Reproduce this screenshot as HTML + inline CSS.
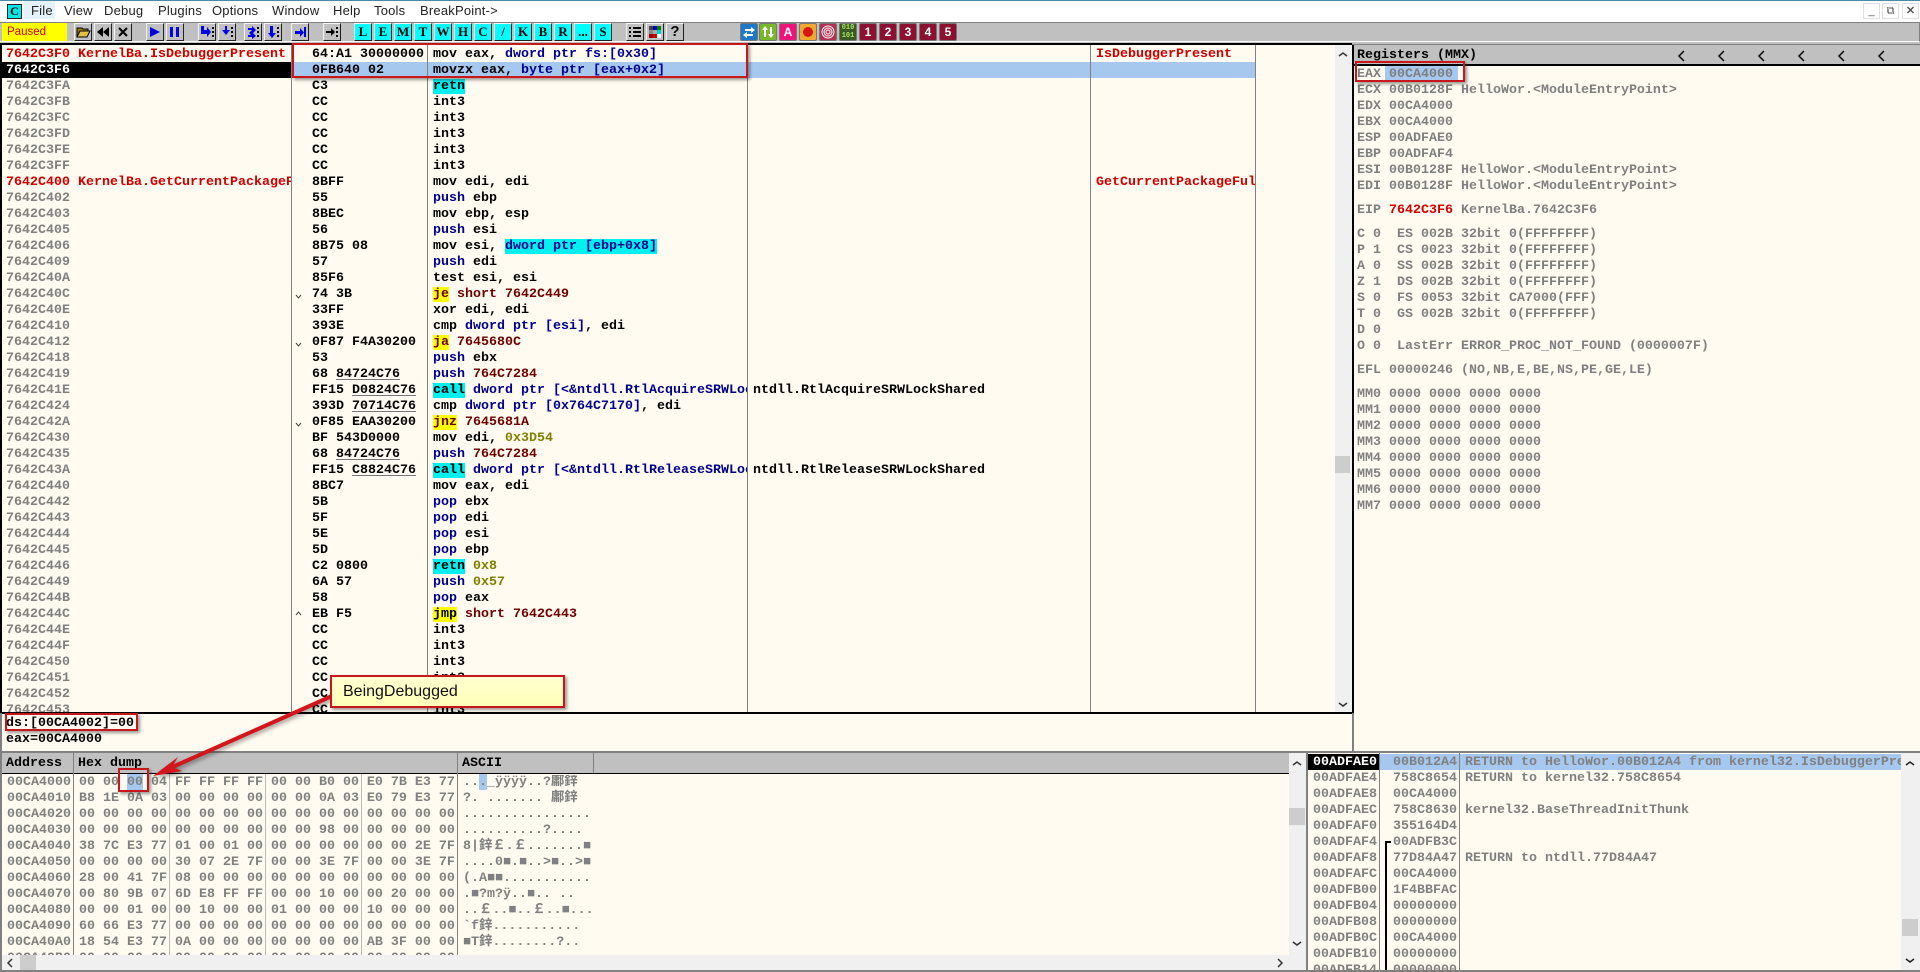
<!DOCTYPE html>
<html lang="en"><head><meta charset="utf-8"><title>OllyDbg</title>
<style>
html,body{margin:0;padding:0;width:1920px;height:972px;overflow:hidden;background:#fffbf0}
body{position:relative;font-family:"Liberation Mono","Noto Sans CJK SC",monospace;font-size:13.33px;font-weight:bold;color:#000}
pre,div.a,svg.a{position:absolute;margin:0}
pre{font:inherit;line-height:16px;white-space:pre;overflow:hidden}
.g{color:#808080}
.n{color:#00008b}
.o{color:#808000}
.d{color:#6e0000}
.rd{color:#d00000}
.c{background:#00f0f0}
.y{background:#ffff00}
.u{text-decoration:underline;text-decoration-color:#777;text-underline-offset:2px;text-decoration-thickness:1px}
.l{position:absolute;background:#808080}
.box{position:absolute;box-sizing:border-box;border:2px solid #c8161d;box-shadow:2px 2px 3px rgba(0,0,0,.4)}
.m{position:absolute;top:2px;font:13px/17px "Liberation Sans",sans-serif;color:#222;letter-spacing:.2px}
.b{position:absolute;top:23px;width:18px;height:18px;box-sizing:border-box;background:#c0c0c0;border:1px solid;border-color:#f4f4f4 #222 #222 #f4f4f4}
.b svg{position:absolute;left:0;top:0}
.k{background:#00ffff;font:bold 13px/16px "Liberation Serif",serif;text-align:center;color:#000}
.q{position:absolute;top:23px;width:18px;height:18px;box-sizing:border-box;border:1px solid #777;border-radius:2px;font:bold 12px/16px "Liberation Sans",sans-serif;text-align:center;color:#fff;background:#8c1030}
.win{position:absolute;top:3px;width:17px;height:16px;box-sizing:border-box;border:1px solid #e0e0e0;font:11px/14px "Liberation Sans",sans-serif;text-align:center;color:#555}
.sb{position:absolute;background:#f0f0f0}
.th{position:absolute;background:#cdcdcd}
</style></head><body>

<!-- title & menu -->
<div class="a" style="left:0;top:0;width:1920px;height:22px;background:#fff"></div>
<div class="a" style="left:0;top:0;width:1920px;height:1px;background:#4a8aa5"></div>
<div class="a" style="left:24px;top:1px;width:31px;height:18px;background:#e5f1fb"></div>
<div class="a" style="left:7px;top:4px;width:15px;height:15px;box-sizing:border-box;background:#00e8e8;border:1px solid #222;font:bold 12px/13px 'Liberation Serif',serif;text-align:center;color:#000">C</div>
<div class="m" style="left:31px">File</div>
<div class="m" style="left:64px">View</div>
<div class="m" style="left:104px">Debug</div>
<div class="m" style="left:158px">Plugins</div>
<div class="m" style="left:212px">Options</div>
<div class="m" style="left:272px">Window</div>
<div class="m" style="left:333px">Help</div>
<div class="m" style="left:374px">Tools</div>
<div class="m" style="left:420px">BreakPoint-&gt;</div>
<div class="win" style="left:1863px">_</div>
<div class="win" style="left:1882px">&#10697;</div>
<div class="win" style="left:1902px;font-weight:bold">&#10005;</div>

<!-- toolbar -->
<div class="a" style="left:0;top:22px;width:1920px;height:20px;box-sizing:border-box;background:#c0c0c0;border-top:1px solid #808080;border-bottom:1px solid #fff;border-right:1px solid #808080"></div>
<div class="a" style="left:0;top:42px;width:1920px;height:2px;background:#c0c0c0"></div>
<div class="a" style="left:2px;top:23px;width:65px;height:18px;background:#ffff00;font:11.500px/18px 'Liberation Sans',sans-serif;color:#d00000;text-indent:5px">Paused</div>

<div class="b" style="left:74px"><svg width="16" height="16"><path d="M2 4h5l1 1h5v2H5L2 13z" fill="#a08000" stroke="#000"/><path d="M2 13l3-6h10l-3 6z" fill="#e0c040" stroke="#000"/></svg></div>
<div class="b" style="left:94px"><svg width="16" height="16"><path d="M8 3v10L2 8zM14 3v10L8 8z" fill="#000"/></svg></div>
<div class="b" style="left:114px"><svg width="16" height="16"><path d="M4 4l8 8M12 4l-8 8" stroke="#000" stroke-width="2"/></svg></div>
<div class="b" style="left:146px"><svg width="16" height="16"><path d="M3 3l10 5-10 5z" fill="#0000e0"/></svg></div>
<div class="b" style="left:166px"><svg width="16" height="16"><path d="M3 3h3v10H3zM9 3h3v10H9z" fill="#0000e0"/></svg></div>
<div class="b" style="left:198px"><svg width="16" height="16"><path d="M2 2h3v4h3V3l4 5-4 5v-3H2z" fill="#0000e0"/><path d="M13 3h2v2h-2zM13 7h2v2h-2zM13 11h2v2h-2z" fill="#000"/></svg></div>
<div class="b" style="left:218px"><svg width="16" height="16"><path d="M6 2h2v4h3l-4 5-4-5h3z" fill="#0000e0"/><path d="M12 3h2v2h-2zM12 7h2v2h-2zM12 11h2v2h-2z" fill="#000"/></svg></div>
<div class="b" style="left:244px"><svg width="16" height="16"><path d="M7 2l4 4-3 3 3 3-4 3v-2H3v-2h3L4 9l3-3H3V4h4z" fill="#0000e0"/><path d="M12 3h2v2h-2zM12 7h2v2h-2zM12 11h2v2h-2z" fill="#000"/></svg></div>
<div class="b" style="left:264px"><svg width="16" height="16"><path d="M5 2h3v7h3l-4 5-4-5h2z" fill="#0000e0"/><path d="M12 3h2v2h-2zM12 7h2v2h-2zM12 11h2v2h-2z" fill="#000"/></svg></div>
<div class="b" style="left:291px"><svg width="16" height="16"><path d="M3 7h5V4l4 4.500-4 4.500V10H3z" fill="#0000e0"/><path d="M12 3h2v10h-2z" fill="#0000e0"/></svg></div>
<div class="b" style="left:323px"><svg width="16" height="16"><path d="M2 7h5V4l4 4-4 4V9H2z" fill="#000"/><path d="M12 3h2v2h-2zM12 7h2v2h-2zM12 11h2v2h-2z" fill="#000"/></svg></div>

<div class="b k" style="left:354px">L</div>
<div class="b k" style="left:374px">E</div>
<div class="b k" style="left:394px">M</div>
<div class="b k" style="left:414px">T</div>
<div class="b k" style="left:434px">W</div>
<div class="b k" style="left:454px">H</div>
<div class="b k" style="left:474px">C</div>
<div class="b k" style="left:494px">/</div>
<div class="b k" style="left:514px">K</div>
<div class="b k" style="left:534px">B</div>
<div class="b k" style="left:554px">R</div>
<div class="b k" style="left:574px">...</div>
<div class="b k" style="left:594px">S</div>
<div class="b" style="left:626px"><svg width="16" height="16"><path d="M2 3h2v2H2zM6 3h8v2H6zM2 7h2v2H2zM6 7h8v2H6zM2 11h2v2H2zM6 11h8v2H6z" fill="#000"/></svg></div>
<div class="b" style="left:646px"><svg width="16" height="16"><path d="M2 2h4v4H2z" fill="#444"/><path d="M6 2h4v4H6z" fill="#0000c0"/><path d="M10 2h4v4h-4z" fill="#008000"/><path d="M2 6h4v4H2z" fill="#888"/><path d="M6 6h4v4H6z" fill="#aaa"/><path d="M10 6h4v4h-4z" fill="#00d0d0"/><path d="M2 10h4v4H2z" fill="#900"/><path d="M6 10h4v4H6z" fill="#c00"/><path d="M10 10h4v4h-4z" fill="#fff"/></svg></div>
<div class="b" style="left:666px;font:bold 15px/16px 'Liberation Sans',sans-serif;text-align:center">?</div>

<div class="q" style="left:740px;background:#1e78c8"><svg width="16" height="16" style="position:absolute;left:0;top:0"><path d="M4 5h6V3l4 3-4 3V7H4zM12 10H6V8l-4 3 4 3v-2h6z" fill="#fff"/></svg></div>
<div class="q" style="left:759px;background:#78b828"><svg width="16" height="16" style="position:absolute;left:0;top:0"><path d="M5 2l3 4H6v7H4V6H2zM11 14l3-4h-2V3h-2v7H8z" fill="#fff"/></svg></div>
<div class="q" style="left:779px;background:#f0147a">A</div>
<div class="q" style="left:799px;background:#f0a830"><svg width="16" height="16" style="position:absolute;left:0;top:0"><circle cx="8" cy="8" r="5" fill="#d81818"/></svg></div>
<div class="q" style="left:819px;background:#b03050"><svg width="16" height="16" style="position:absolute;left:0;top:0" fill="none" stroke="#fff"><circle cx="8" cy="8" r="6"/><circle cx="8" cy="8" r="4"/><circle cx="8" cy="8" r="2"/></svg></div>
<div class="q" style="left:839px;background:#3a5a20;font:bold 7px/8px 'Liberation Mono',monospace;color:#a8e070">010<br>101</div>
<div class="q" style="left:859px">1</div>
<div class="q" style="left:879px">2</div>
<div class="q" style="left:899px">3</div>
<div class="q" style="left:919px">4</div>
<div class="q" style="left:939px">5</div>

<!-- frame lines -->
<div class="a" style="left:0;top:44px;width:1920px;height:1px;background:#808080"></div>
<div class="a" style="left:0;top:43px;width:1352px;height:2px;background:#000"></div>
<div class="a" style="left:0;top:45px;width:2px;height:927px;background:#808080"></div>
<div class="a" style="left:0;top:45px;width:2px;height:668px;background:#000"></div>

<!-- CPU disasm -->
<div class="a" style="left:2px;top:62px;width:289px;height:16px;background:#000"></div>
<div class="a" style="left:292px;top:62px;width:963px;height:16px;background:#a6c8ef"></div>
<pre style="left:6px;top:47px;width:285px;height:665px" class="g"><span class="rd">7642C3F0 KernelBa.IsDebuggerPresent</span>
<span style="color:#fff">7642C3F6</span>
7642C3FA
7642C3FB
7642C3FC
7642C3FD
7642C3FE
7642C3FF
<span class="rd">7642C400 KernelBa.GetCurrentPackageFullName</span>
7642C402
7642C403
7642C405
7642C406
7642C409
7642C40A
7642C40C
7642C40E
7642C410
7642C412
7642C418
7642C419
7642C41E
7642C424
7642C42A
7642C430
7642C435
7642C43A
7642C440
7642C442
7642C443
7642C444
7642C445
7642C446
7642C449
7642C44B
7642C44C
7642C44E
7642C44F
7642C450
7642C451
7642C452
7642C453</pre>
<pre style="left:312px;top:47px;width:115px;height:665px">64:A1 30000000
0FB640 02
C3
CC
CC
CC
CC
CC
8BFF
55
8BEC
56
8B75 08
57
85F6
74 3B
33FF
393E
0F87 F4A30200
53
68 <span class="u">84724C76</span>
FF15 <span class="u">D0824C76</span>
393D <span class="u">70714C76</span>
0F85 EAA30200
BF 543D0000
68 <span class="u">84724C76</span>
FF15 <span class="u">C8824C76</span>
8BC7
5B
5F
5E
5D
C2 0800
6A 57
58
EB F5
CC
CC
CC
CC
CC
CC</pre>
<pre style="left:433px;top:47px;width:314px;height:665px">mov eax, <span class="n">dword ptr fs:[0x30]</span>
movzx eax, <span class="n">byte ptr [eax+0x2]</span>
<span class="c">retn</span>
int3
int3
int3
int3
int3
mov edi, edi
<span class="n">push</span> ebp
mov ebp, esp
<span class="n">push</span> esi
mov esi, <span class="n c">dword ptr [ebp+0x8]</span>
<span class="n">push</span> edi
test esi, esi
<span class="y d">je</span> <span class="d">short 7642C449</span>
xor edi, edi
cmp <span class="n">dword ptr [esi]</span>, edi
<span class="y d">ja</span> <span class="d">7645680C</span>
<span class="n">push</span> ebx
<span class="n">push</span> <span class="d">764C7284</span>
<span class="c">call</span> <span class="n">dword ptr [&lt;&amp;ntdll.RtlAcquireSRWLockShared&gt;]</span>
cmp <span class="n">dword ptr [0x764C7170]</span>, edi
<span class="y d">jnz</span> <span class="d">7645681A</span>
mov edi, <span class="o">0x3D54</span>
<span class="n">push</span> <span class="d">764C7284</span>
<span class="c">call</span> <span class="n">dword ptr [&lt;&amp;ntdll.RtlReleaseSRWLockShared&gt;]</span>
mov eax, edi
<span class="n">pop</span> ebx
<span class="n">pop</span> edi
<span class="n">pop</span> esi
<span class="n">pop</span> ebp
<span class="c">retn</span> <span class="o">0x8</span>
<span class="n">push</span> <span class="o">0x57</span>
<span class="n">pop</span> eax
<span class="y">jmp</span> <span class="d">short 7642C443</span>
int3
int3
int3
int3
int3
int3</pre>
<pre style="left:753px;top:383px;width:336px;height:100px">ntdll.RtlAcquireSRWLockShared




ntdll.RtlReleaseSRWLockShared</pre>
<pre class="rd" style="left:1096px;top:47px;width:159px;height:16px">IsDebuggerPresent</pre>
<pre class="rd" style="left:1096px;top:175px;width:159px;height:16px">GetCurrentPackageFullName</pre>
<div class="l" style="left:291px;top:45px;width:1px;height:668px"></div>
<div class="l" style="left:427px;top:45px;width:1px;height:668px"></div>
<div class="l" style="left:747px;top:45px;width:1px;height:668px"></div>
<div class="l" style="left:1090px;top:45px;width:1px;height:668px"></div>
<div class="l" style="left:1255px;top:45px;width:1px;height:668px"></div>
<svg class="a" style="left:295px;top:290px" width="8" height="340" fill="none" stroke="#444"><path d="M1 5l2.500 3L6 5M1 53l2.500 3L6 53M1 133l2.500 3L6 133M1 325l2.500-3L6 325"/></svg>

<!-- disasm scrollbar -->
<div class="sb" style="left:1335px;top:45px;width:17px;height:668px"></div>
<div class="th" style="left:1335px;top:456px;width:15px;height:17px"></div>
<svg class="a" style="left:1338px;top:51px" width="10" height="660" fill="none" stroke="#333" stroke-width="1.500"><path d="M1 5l4-3 4 3M1 652l4 3 4-3"/></svg>
<div class="a" style="left:1352px;top:45px;width:2px;height:668px;background:#000"></div>
<div class="a" style="left:1352px;top:713px;width:2px;height:39px;background:#808080"></div>
<div class="a" style="left:2px;top:712px;width:1350px;height:2px;background:#000"></div>

<!-- info pane -->
<pre style="left:6px;top:716px;width:1300px;height:34px">ds:[00CA4002]=00
eax=00CA4000</pre>

<!-- registers -->
<div class="a" style="left:1354px;top:45px;width:566px;height:19px;background:#c0c0c0"></div>
<div class="a" style="left:1354px;top:64px;width:566px;height:2px;background:#000"></div>
<pre style="left:1357px;top:48px;width:300px;height:16px">Registers (MMX)</pre>
<svg class="a" style="left:1675px;top:50px" width="215" height="12" fill="none" stroke="#000" stroke-width="1.500"><path d="M9 1L4 6l5 5M49 1L44 6l5 5M89 1L84 6l5 5M129 1l-5 5 5 5M169 1l-5 5 5 5M209 1l-5 5 5 5"/></svg>
<div class="a" style="left:1385px;top:66px;width:73px;height:16px;background:#a6c8ef"></div>
<pre class="g" style="left:1357px;top:67px;width:550px;height:130px">EAX 00CA4000
ECX 00B0128F HelloWor.&lt;ModuleEntryPoint&gt;
EDX 00CA4000
EBX 00CA4000
ESP 00ADFAE0
EBP 00ADFAF4
ESI 00B0128F HelloWor.&lt;ModuleEntryPoint&gt;
EDI 00B0128F HelloWor.&lt;ModuleEntryPoint&gt;</pre>
<pre class="g" style="left:1357px;top:203px;width:550px;height:16px">EIP <span class="rd">7642C3F6</span> KernelBa.7642C3F6</pre>
<pre class="g" style="left:1357px;top:227px;width:550px;height:128px">C 0  ES 002B 32bit 0(FFFFFFFF)
P 1  CS 0023 32bit 0(FFFFFFFF)
A 0  SS 002B 32bit 0(FFFFFFFF)
Z 1  DS 002B 32bit 0(FFFFFFFF)
S 0  FS 0053 32bit CA7000(FFF)
T 0  GS 002B 32bit 0(FFFFFFFF)
D 0
O 0  LastErr ERROR_PROC_NOT_FOUND (0000007F)</pre>
<pre class="g" style="left:1357px;top:363px;width:550px;height:16px">EFL 00000246 (NO,NB,E,BE,NS,PE,GE,LE)</pre>
<pre class="g" style="left:1357px;top:387px;width:550px;height:128px">MM0 0000 0000 0000 0000
MM1 0000 0000 0000 0000
MM2 0000 0000 0000 0000
MM3 0000 0000 0000 0000
MM4 0000 0000 0000 0000
MM5 0000 0000 0000 0000
MM6 0000 0000 0000 0000
MM7 0000 0000 0000 0000</pre>

<!-- separators -->
<div class="a" style="left:0;top:751px;width:1920px;height:2px;background:#808080"></div>

<!-- dump -->
<div class="a" style="left:2px;top:753px;width:1287px;height:20px;background:#c0c0c0"></div>
<div class="a" style="left:2px;top:773px;width:1287px;height:1px;background:#000"></div>
<pre style="left:6px;top:756px;width:66px;height:16px">Address</pre>
<pre style="left:78px;top:756px;width:370px;height:16px">Hex dump</pre>
<pre style="left:462px;top:756px;width:120px;height:16px">ASCII</pre>
<div class="a" style="left:127px;top:774px;width:16px;height:16px;background:#a6c8ef"></div>
<div class="a" style="left:479px;top:774px;width:8px;height:16px;background:#a6c8ef"></div>
<pre class="g" style="left:7px;top:775px;width:66px;height:180px">00CA4000
00CA4010
00CA4020
00CA4030
00CA4040
00CA4050
00CA4060
00CA4070
00CA4080
00CA4090
00CA40A0
00CA40B0</pre>
<pre class="g" style="left:79px;top:775px;width:378px;height:180px">00 00 00 04 FF FF FF FF 00 00 B0 00 E0 7B E3 77
B8 1E 0A 03 00 00 00 00 00 00 0A 03 E0 79 E3 77
00 00 00 00 00 00 00 00 00 00 00 00 00 00 00 00
00 00 00 00 00 00 00 00 00 00 98 00 00 00 00 00
38 7C E3 77 01 00 01 00 00 00 00 00 00 00 2E 7F
00 00 00 00 30 07 2E 7F 00 00 3E 7F 00 00 3E 7F
28 00 41 7F 08 00 00 00 00 00 00 00 00 00 00 00
00 80 9B 07 6D E8 FF FF 00 00 10 00 00 20 00 00
00 00 01 00 00 10 00 00 01 00 00 00 10 00 00 00
60 66 E3 77 00 00 00 00 00 00 00 00 00 00 00 00
18 54 E3 77 0A 00 00 00 00 00 00 00 AB 3F 00 00
00 00 00 00 00 00 00 00 00 00 00 00 00 00 00 00</pre>
<pre class="g" style="left:463px;top:775px;width:130px;height:180px">..._ÿÿÿÿ..?鄘鋅
?. ....... 鄘鋅
................
..........?....
8|鋅￡.￡.......■
....0■.■..&gt;■..&gt;■
(.A■■...........
.■?m?ÿ..■.. ..
..￡..■..￡..■...
`f鋅...........
■T鋅........?..</pre>
<div class="l" style="left:73px;top:753px;width:1px;height:202px"></div>
<div class="l" style="left:169px;top:774px;width:1px;height:181px;background:#bbb"></div>
<div class="l" style="left:265px;top:774px;width:1px;height:181px;background:#bbb"></div>
<div class="l" style="left:361px;top:774px;width:1px;height:181px;background:#bbb"></div>
<div class="l" style="left:457px;top:753px;width:1px;height:202px"></div>
<div class="l" style="left:593px;top:753px;width:1px;height:20px"></div>
<div class="sb" style="left:2px;top:955px;width:1287px;height:16px"></div>
<div class="th" style="left:20px;top:955px;width:16px;height:16px"></div>
<svg class="a" style="left:6px;top:957px" width="1282" height="12" fill="none" stroke="#333" stroke-width="1.500"><path d="M6 2L2 6l4 4M1272 2l4 4-4 4"/></svg>
<div class="sb" style="left:1289px;top:753px;width:17px;height:218px"></div>
<div class="th" style="left:1289px;top:808px;width:16px;height:17px"></div>
<svg class="a" style="left:1292px;top:758px" width="10" height="192" fill="none" stroke="#333" stroke-width="1.500"><path d="M1 7l4-3 4 3M1 184l4 3 4-3"/></svg>

<!-- stack -->
<div class="a" style="left:1306px;top:753px;width:2px;height:218px;background:#808080"></div>
<div class="a" style="left:1308px;top:754px;width:71px;height:16px;background:#000"></div>
<div class="a" style="left:1380px;top:754px;width:521px;height:16px;background:#a6c8ef"></div>
<pre class="g" style="left:1313px;top:755px;width:66px;height:216px"><span style="color:#fff">00ADFAE0</span>
00ADFAE4
00ADFAE8
00ADFAEC
00ADFAF0
00ADFAF4
00ADFAF8
00ADFAFC
00ADFB00
00ADFB04
00ADFB08
00ADFB0C
00ADFB10
00ADFB14</pre>
<pre class="g" style="left:1393px;top:755px;width:66px;height:216px">00B012A4
758C8654
00CA4000
758C8630
355164D4
00ADFB3C
77D84A47
00CA4000
1F4BBFAC
00000000
00000000
00CA4000
00000000
00000000</pre>
<pre class="g" style="left:1465px;top:755px;width:436px;height:216px">RETURN to HelloWor.00B012A4 from kernel32.IsDebuggerPresent
RETURN to kernel32.758C8654

kernel32.BaseThreadInitThunk


RETURN to ntdll.77D84A47</pre>
<div class="l" style="left:1379px;top:753px;width:1px;height:218px"></div>
<div class="l" style="left:1459px;top:753px;width:1px;height:218px"></div>
<div class="a" style="left:1385px;top:841px;width:2px;height:130px;background:#000"></div>
<div class="a" style="left:1385px;top:841px;width:6px;height:2px;background:#000"></div>
<div class="sb" style="left:1901px;top:753px;width:19px;height:218px"></div>
<div class="th" style="left:1902px;top:919px;width:16px;height:17px"></div>
<svg class="a" style="left:1905px;top:758px" width="10" height="210" fill="none" stroke="#222" stroke-width="1.500"><path d="M1 7l4-3 4 3M1 201l4 3 4-3"/></svg>
<div class="a" style="left:0;top:970px;width:1920px;height:2px;background:#808080"></div>

<!-- annotations -->
<div class="box" style="left:292px;top:43px;width:456px;height:35px"></div>
<div class="box" style="left:1355px;top:61px;width:110px;height:21px"></div>
<div class="box" style="left:5px;top:713px;width:133px;height:18px"></div>
<div class="box" style="left:118px;top:768px;width:31px;height:24px"></div>
<svg class="a" style="left:0;top:0;filter:drop-shadow(2px 2px 2px rgba(0,0,0,.4))" width="1920" height="972"><path d="M332 696L168 769" stroke="#d2161c" stroke-width="4"/><path d="M153 776L178 757L172 767L182 771z" fill="#d2161c"/></svg>
<div class="box" style="left:330px;top:675px;width:235px;height:33px;background:linear-gradient(#ffffd0,#ffffb8);font:16px/29px 'Liberation Sans',sans-serif;color:#111;padding-left:11px">BeingDebugged</div>
</body></html>
